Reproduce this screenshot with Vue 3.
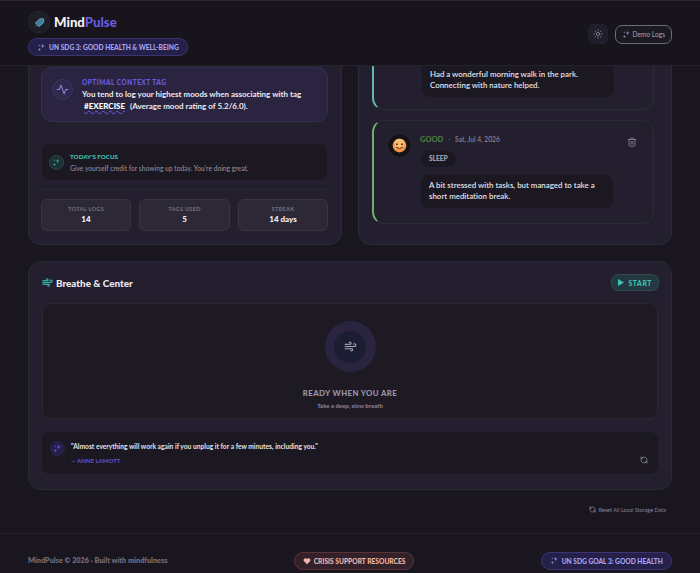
<script setup>
const sparkPath = 'M15 2l1.600 4.400L21 8l-4.400 1.600L15 14l-1.600-4.400L9 8l4.400-1.600zM6.500 13l1.200 3.300L11 17.500l-3.300 1.200L6.500 22l-1.200-3.300L2 17.500l3.300-1.200zM6 3l.8 2.200L9 6l-2.200.8L6 9l-.8-2.200L3 6l2.200-.8z';
const windPath = 'M17.700 7.700a2.500 2.500 0 1 1 1.800 4.300H2M9.600 4.600A2 2 0 1 1 11 8H2M12.600 19.400A2 2 0 1 0 14 16H2';
const refreshPath = 'M21 12a9 9 0 0 0-15-6.700L3 8M3 3v5h5M3 12a9 9 0 0 0 15 6.700l3-2.700M21 21v-5h-5';
const stats = [
  { label: 'Total Logs', value: '14' },
  { label: 'Tags Used', value: '5' },
  { label: 'Streak', value: '14 days' },
];
</script>

<template>
  <div class="page">
    <header class="topbar">
      <div class="brand">
        <div class="brand-row">
          <div class="logo">
            <svg width="11" height="11" viewBox="0 0 24 24" fill="#3f7f9a" stroke="#6a9fc0" stroke-width="2" stroke-linejoin="round"><path d="M3 13 13 4h8v8L11 21z"/><path d="M3 21l4-4" fill="none" stroke="#2f8f6a"/></svg>
          </div>
          <h1><span class="mind">Mind</span><span class="pulse">Pulse</span></h1>
        </div>
        <div class="pill sdg small">
          <svg class="spark" viewBox="0 0 24 24"><path :d="sparkPath"/></svg>
          UN SDG 3: Good Health &amp; Well-Being
        </div>
      </div>
      <div class="actions">
        <button class="icon-btn">
          <svg width="10" height="10" viewBox="0 0 24 24" fill="none" stroke="#8f8a9c" stroke-width="2" stroke-linecap="round"><circle cx="12" cy="12" r="4"/><path d="M12 2v2M12 20v2M4.900 4.900l1.400 1.400M17.700 17.700l1.400 1.400M2 12h2M20 12h2M6.300 17.700l-1.400 1.400M19.100 4.900l-1.400 1.400"/></svg>
        </button>
        <button class="demo">
          <svg class="spark grey" viewBox="0 0 24 24"><path :d="sparkPath"/></svg>
          Demo Logs
        </button>
      </div>
    </header>

    <main class="content">
      <div class="columns">
        <section class="card left">
          <div class="insight">
            <div class="insight-icon">
              <svg width="13" height="13" viewBox="0 0 24 24" fill="none" stroke="#8b80d8" stroke-width="2" stroke-linecap="round" stroke-linejoin="round"><path d="M22 12h-4l-3 8-6-16-3 8H2"/></svg>
            </div>
            <div>
              <div class="insight-label">Optimal Context Tag</div>
              <p class="insight-text">You tend to log your highest moods when associating with tag<br><b class="tag">#EXERCISE</b> (Average mood rating of 5.2/6.0).</p>
            </div>
          </div>
          <div class="focus">
            <div class="focus-icon">
              <svg class="spark teal" viewBox="0 0 24 24"><path :d="sparkPath"/></svg>
            </div>
            <div>
              <div class="focus-label">Today's Focus</div>
              <div class="focus-text">Give yourself credit for showing up today. You're doing great.</div>
            </div>
          </div>
          <div class="stats">
            <div v-for="s in stats" :key="s.label" class="stat">
              <div class="stat-label">{{ s.label }}</div>
              <div class="stat-value">{{ s.value }}</div>
            </div>
          </div>
        </section>

        <section class="card right">
          <article class="entry first">
            <div class="note">Had a wonderful morning walk in the park. Connecting with nature helped.</div>
          </article>
          <article class="entry second">
            <div class="avatar">
              <svg width="15" height="15" viewBox="0 0 24 24"><circle cx="12" cy="12" r="11" fill="#f2934a"/><circle cx="12" cy="9" r="8" fill="#f8c071"/><circle cx="8" cy="10" r="1.600" fill="#5b3418"/><circle cx="16" cy="10" r="1.600" fill="#5b3418"/><path d="M7 15q5 4 10 0" fill="none" stroke="#5b3418" stroke-width="1.600" stroke-linecap="round"/></svg>
            </div>
            <div class="entry-body">
              <div class="entry-head">
                <span class="mood">GOOD</span>
                <span class="dot">·</span>
                <span class="date">Sat, Jul 4, 2026</span>
                <svg class="trash" width="10" height="10" viewBox="0 0 24 24" fill="none" stroke="#8a8597" stroke-width="2" stroke-linecap="round" stroke-linejoin="round"><path d="M3 6h18M19 6v14a2 2 0 0 1-2 2H7a2 2 0 0 1-2-2V6M8 6V4a2 2 0 0 1 2-2h4a2 2 0 0 1 2 2v2M10 11v6M14 11v6"/></svg>
              </div>
              <span class="chip">SLEEP</span>
              <div class="note">A bit stressed with tasks, but managed to take a short meditation break.</div>
            </div>
          </article>
        </section>
      </div>

      <section class="card breathe">
        <div class="breathe-head">
          <h2>
            <svg width="11" height="11" viewBox="0 0 24 24" fill="none" stroke="#2fa39a" stroke-width="3" stroke-linecap="round"><path :d="windPath"/></svg>
            Breathe &amp; Center
          </h2>
          <button class="start">
            <svg width="6" height="7" viewBox="0 0 7 8"><path d="M0 0l7 4-7 4z" fill="#3fc2b4"/></svg>
            Start
          </button>
        </div>
        <div class="breathe-box">
          <div class="ring">
            <div class="ring-inner">
              <svg width="13" height="13" viewBox="0 0 24 24" fill="none" stroke="#a9a5b5" stroke-width="2" stroke-linecap="round"><path :d="windPath"/></svg>
            </div>
          </div>
          <div class="ready">Ready When You Are</div>
          <div class="ready-sub">Take a deep, slow breath</div>
        </div>
        <div class="quote">
          <div class="quote-icon">
            <svg class="spark violet" viewBox="0 0 24 24"><path :d="sparkPath"/></svg>
          </div>
          <div class="quote-body">
            <div class="quote-text">"Almost everything will work again if you unplug it for a few minutes, including you."</div>
            <div class="quote-by">— Anne Lamott</div>
          </div>
          <svg class="refresh" width="8" height="8" viewBox="0 0 24 24" fill="none" stroke="#8a8597" stroke-width="2.500" stroke-linecap="round" stroke-linejoin="round"><path :d="refreshPath"/></svg>
        </div>
      </section>

      <div class="reset">
        <svg width="7" height="7" viewBox="0 0 24 24" fill="none" stroke="#8a8597" stroke-width="2.500" stroke-linecap="round" stroke-linejoin="round"><path :d="refreshPath"/></svg>
        Reset All Local Storage Data
      </div>
    </main>

    <footer class="footer">
      <span class="copy">MindPulse © 2026 · Built with mindfulness</span>
      <div class="pill crisis">
        <svg width="8" height="8" viewBox="0 0 24 24" fill="#f0b5a8"><path d="M12 22 3 12.500A5.500 5.500 0 0 1 12 6a5.500 5.500 0 0 1 9 6.500z"/></svg>
        Crisis Support Resources
      </div>
      <div class="pill sdg">
        <svg class="spark" viewBox="0 0 24 24"><path :d="sparkPath"/></svg>
        UN SDG Goal 3: Good Health
      </div>
    </footer>
  </div>
</template>

<style>
html, body { margin: 0; background: #19161f; }
</style>

<style scoped>
* { box-sizing: border-box; }
.page {
  width: 700px;
  height: 573px;
  overflow: hidden;
  display: flex;
  flex-direction: column;
  background: #19161f;
  color: #e8e6ee;
  font-family: Lato, "Noto Sans", sans-serif;
}
.topbar {
  height: 66px;
  flex: none;
  padding: 10px 28px 0;
  display: flex;
  justify-content: space-between;
  background: #17141c;
  border-top: 1px solid #2a2733;
  border-bottom: 1px solid #24212c;
}
.brand-row { display: flex; align-items: center; gap: 4px; height: 22px; }
.logo {
  width: 22px;
  height: 22px;
  border-radius: 10px;
  background: #1c2026;
  border: 1px solid #24282e;
  display: flex;
  align-items: center;
  justify-content: center;
}
h1 { margin: 0; font-size: 13.200px; font-weight: 900; }
.mind { color: #f3f1f7; }
.pulse { color: #6a5ce0; }
.pill {
  display: inline-flex;
  align-items: center;
  gap: 3px;
  height: 18px;
  padding: 0 8px;
  border-radius: 9px;
  font-size: 6.650px;
  font-weight: 900;
  text-transform: uppercase;
}
.sdg { background: #25204a; border: 1px solid #3a3470; color: #a8a2f0; }
.sdg.small { margin-top: 5px; }
.spark { width: 9px; height: 9px; fill: #8f88d8; }
.spark.grey { fill: #8a8597; }
.spark.teal { fill: #2fa39a; }
.spark.violet { fill: #6a5ce0; }
.actions { display: flex; align-items: center; gap: 7px; height: 44px; margin-top: 1px; }
button { font-family: inherit; }
.icon-btn {
  width: 20px;
  height: 20px;
  padding: 0;
  border-radius: 6px;
  border: 1px solid #24212f;
  background: #211e2b;
  display: flex;
  align-items: center;
  justify-content: center;
}
.demo {
  display: flex;
  align-items: center;
  gap: 2px;
  height: 19px;
  padding: 0 6px;
  border-radius: 7px;
  border: 1px solid #6e6a78;
  background: #1b1922;
  color: #a6a2b0;
  font-size: 6.600px;
}
.content { flex: 1; padding: 0 28px; display: flex; flex-direction: column; }
.columns { display: grid; grid-template-columns: 314px 314px; gap: 16px; height: 178px; }
.card { background: #241f2e; border: 1px solid #2d2a37; border-radius: 13px; }
.left, .right { border-top: none; border-top-left-radius: 0; border-top-right-radius: 0; }
.left { padding: 1px 13px 13px 12px; display: flex; flex-direction: column; }
.insight {
  display: flex;
  gap: 9px;
  height: 55px;
  padding: 11px 10px;
  background: #2a2440;
  border: 1px solid #352f4e;
  border-radius: 11px;
}
.insight-icon, .focus-icon, .quote-icon {
  flex: none;
  display: flex;
  align-items: center;
  justify-content: center;
  border-radius: 50%;
}
.insight-icon { width: 21px; height: 21px; background: #2f2a4d; border: 1px solid #3c3662; }
.insight-label { font-size: 6.500px; font-weight: 900; letter-spacing: 0.5px; color: #6a5ce0; text-transform: uppercase; line-height: 9px; margin-top: -1px; }
.insight-text { margin: 2px 0 0; font-size: 8px; font-weight: 700; line-height: 11.500px; color: #eceaf2; }
.tag { margin: 0 3px 0 2px; color: #fff; text-decoration: underline wavy #6a5ce0 1px; font-weight: 900; }
.focus {
  margin: 22px 1px 0;
  height: 36px;
  display: flex;
  align-items: center;
  gap: 6px;
  padding: 0 8px 0 7px;
  background: #1b1822;
  border-radius: 8px;
}
.focus-icon { width: 15px; height: 15px; background: #1f3034; border: 1px solid #2b4a4c; }
.focus-label { font-size: 6.200px; font-weight: 900; color: #3fc2b4; text-transform: uppercase; line-height: 9px; }
.focus-text { font-size: 6.700px; font-weight: 500; color: #8f8a9c; margin-top: 2px; line-height: 10px; }
.stats {
  margin-top: 9px;
  padding-top: 9px;
  border-top: 1px solid #2b2835;
  display: grid;
  grid-template-columns: 90px 91px 90px;
  gap: 8px;
}
.stat {
  height: 32px;
  background: #2c2836;
  border: 1px solid #383442;
  border-radius: 6px;
  text-align: center;
  padding-top: 4px;
}
.stat-label { font-size: 5.600px; font-weight: 900; letter-spacing: 0.3px; color: #6f6b7a; text-transform: uppercase; line-height: 9px; }
.stat-value { font-size: 8px; font-weight: 900; color: #f3f1f7; line-height: 11px; margin-top: 1px; }
.right { padding: 0 17px 20px 13px; display: flex; flex-direction: column; gap: 10px; }
.entry {
  background: #241f2e;
  border: 1px solid #2d2a37;
  border-radius: 12px;
}
.first {
  height: 44px;
  border-top: none;
  border-top-left-radius: 0;
  border-top-right-radius: 0;
  border-left: 2px solid #5fb8ac;
  padding-left: 48px;
}
.second {
  height: 104px;
  border-left: 2px solid #6faf6a;
  padding: 12px 18px 0 13px;
  display: flex;
  gap: 9px;
}
.note {
  width: 192px;
  padding: 0 8px;
  background: #1b1822;
  border-radius: 8px;
  font-size: 7.900px;
  font-weight: 600;
  line-height: 11px;
  color: #e4e2ea;
}
.first .note { height: 31px; padding-bottom: 4px; border-radius: 0 0 8px 8px; display: flex; align-items: center; }
.second .note { height: 33px; display: flex; align-items: center; margin-top: 8px; }
.avatar {
  flex: none;
  width: 25px;
  height: 25px;
  border-radius: 50%;
  background: #15131a;
  border: 1px solid #2b2835;
  display: flex;
  align-items: center;
  justify-content: center;
}
.entry-body { flex: 1; }
.entry-head { display: flex; align-items: center; gap: 4px; height: 12px; font-size: 6.700px; }
.mood { color: #4a7c3f; font-weight: 900; font-size: 7.500px; margin-left: -1px; }
.dot { color: #6f6b7a; margin: 0 1px; }
.date { color: #8f8a9c; font-weight: 500; }
.trash { margin-left: auto; margin-top: 5px; margin-right: -2px; }
.chip {
  display: inline-flex;
  align-items: center;
  margin-top: 5px;
  height: 16px;
  padding: 0 8px;
  background: #1b1822;
  border-radius: 8px;
  font-size: 6.500px;
  font-weight: 800;
  color: #a09cab;
}
.breathe { margin-top: 17px; height: 229px; padding: 0 13px; }
.breathe-head { display: flex; justify-content: space-between; align-items: center; height: 41px; }
h2 { margin: 0; display: flex; align-items: center; gap: 3px; font-size: 9.900px; font-weight: 900; color: #eceaf2; }
.start {
  display: flex;
  align-items: center;
  gap: 4px;
  height: 17px;
  padding: 0 6px;
  margin-right: -1px;
  border-radius: 7px;
  border: 1px solid #2f4c50;
  background: #24393f;
  color: #3fc2b4;
  font-size: 6.800px;
  font-weight: 900;
  letter-spacing: 0.6px;
  text-transform: uppercase;
}
.breathe-box {
  height: 116px;
  background: #1e1a24;
  border: 1px solid #2a2733;
  border-radius: 8px;
  display: flex;
  flex-direction: column;
  align-items: center;
  padding-top: 17px;
}
.ring {
  width: 51px;
  height: 51px;
  border-radius: 50%;
  background: #2a2440;
  display: flex;
  align-items: center;
  justify-content: center;
}
.ring-inner {
  width: 32px;
  height: 32px;
  border-radius: 50%;
  background: #1b1d33;
  display: flex;
  align-items: center;
  justify-content: center;
}
.ready { margin-top: 16px; font-size: 7.800px; font-weight: 900; letter-spacing: 0.4px; color: #9a94a8; text-transform: uppercase; line-height: 11px; }
.ready-sub { margin-top: 3px; font-size: 6px; font-weight: 900; color: #857f92; line-height: 8px; }
.quote {
  margin-top: 13px;
  height: 42px;
  display: flex;
  gap: 6px;
  padding: 9px 8px 0;
  background: #1b1822;
  border-radius: 8px;
}
.quote-icon { width: 15px; height: 15px; background: #25204a; }
.quote-text { font-size: 6.660px; font-weight: 700; color: #e4e2ea; line-height: 10px; }
.quote-by { margin-top: 6px; font-size: 6px; font-weight: 900; color: #5d50c8; text-transform: uppercase; line-height: 8px; }
.refresh { margin-left: auto; margin-top: 15px; margin-right: 2px; }
.reset {
  display: flex;
  justify-content: flex-end;
  align-items: center;
  gap: 3px;
  margin-top: 15px;
  padding-right: 6px;
  font-size: 5.500px;
  color: #8a8597;
  height: 9px;
}
.footer {
  flex: none;
  height: 40px;
  border-top: 1px solid #25222d;
  padding: 14px 28px 0;
  display: flex;
  align-items: center;
  justify-content: space-between;
}
.copy { font-size: 7.250px; font-weight: 800; color: #6f6b7a; }
.crisis { background: #33212a; border: 1px solid #5a3238; color: #f0b5a8; }
</style>
